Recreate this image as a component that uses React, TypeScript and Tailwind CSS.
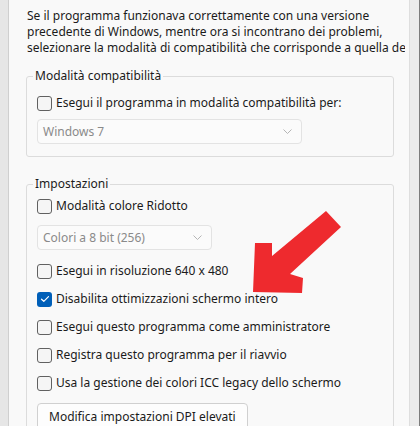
import React from "react";

const font = { fontFamily: '"Noto Sans", "Open Sans", sans-serif' };

const Check = ({ checked }: { checked?: boolean }) =>
  checked ? (
    <span className="w-[15px] h-[15px] rounded-[3px] bg-[#005fb8] flex items-center justify-center shrink-0">
      <svg width="10" height="8" viewBox="0 0 10 8" fill="none">
        <path d="M1.5 4.2 L3.8 6.3 L8.5 1.6" stroke="#fff" strokeWidth="1.2" strokeLinecap="round" strokeLinejoin="round" />
      </svg>
    </span>
  ) : (
    <span className="w-[15px] h-[15px] rounded-[3px] border border-[#616161] bg-[#f5f5f5] shrink-0" />
  );

const Row = ({ label, checked }: { label: string; checked?: boolean }) => (
  <div className="h-[28px] flex items-center gap-[4px]">
    <Check checked={checked} />
    <span className="text-[12px] leading-[16px] text-[#1b1b1b] whitespace-nowrap">{label}</span>
  </div>
);

const Select = ({ value, width }: { value: string; width: string }) => (
  <div
    className={`${width} h-[25px] border border-[#e3e3e3] rounded-[4px] bg-[#fbfbfb] flex items-center justify-between pl-[5px] pr-[9px]`}
  >
    <span className="text-[12px] leading-[16px] text-[#8a8a8a]">{value}</span>
    <svg width="9" height="5" viewBox="0 0 9 5" fill="none">
      <path d="M0.5 0.5 L4.5 4.5 L8.5 0.5" stroke="#b5b5b5" strokeWidth="1" />
    </svg>
  </div>
);

const App = () => {
  return (
    <div className="w-[420px] h-[426px] flex overflow-hidden bg-[#f9f9f9]" style={font}>
      <div className="w-[9px] h-full bg-[#e6e6e6] border-r border-[#cfcfcf]" />

      <div className="relative flex-1 h-full bg-[#f9f9f9] overflow-hidden">
        {/* intro text, clipped at the right like the window is */}
        <div className="pt-[8px] pl-[18px] mr-[4px] overflow-hidden text-[12px] leading-[16px] text-[#1b1b1b] whitespace-nowrap">
          <div>Se il programma funzionava correttamente con una versione</div>
          <div>precedente di Windows, mentre ora si incontrano dei problemi,</div>
          <div>selezionare la modalità di compatibilità che corrisponde a quella della versione.</div>
        </div>

        <fieldset className="ml-[17px] mr-[15px] mt-[12px] border border-[#dcdcdc] rounded-[3px] pl-[10px] pr-[10px] pt-[5px] pb-[12px]">
          <legend className="ml-[-4px] px-[2px] text-[12px] leading-[16px] text-[#1b1b1b]">
            Modalità compatibilità
          </legend>
          <Row label="Esegui il programma in modalità compatibilità per:" />
          <div className="mt-[2px]">
            <Select value="Windows 7" width="w-[265px]" />
          </div>
        </fieldset>

        <fieldset className="ml-[17px] mr-[15px] mt-[19px] border border-[#dcdcdc] rounded-[3px] pl-[10px] pr-[10px] pt-0 pb-[12px]">
          <legend className="ml-[-4px] px-[2px] text-[12px] leading-[16px] text-[#1b1b1b]">
            Impostazioni
          </legend>
          <Row label="Modalità colore Ridotto" />
          <div className="mt-[5px] mb-[7px]">
            <Select value="Colori a 8 bit (256)" width="w-[175px]" />
          </div>
          <Row label="Esegui in risoluzione 640 x 480" />
          <Row label="Disabilita ottimizzazioni schermo intero" checked />
          <Row label="Esegui questo programma come amministratore" />
          <Row label="Registra questo programma per il riavvio" />
          <Row label="Usa la gestione dei colori ICC legacy dello schermo" />
          <button className="mt-[6px] h-[27px] px-[11px] border border-[#d0d0d0] rounded-[4px] bg-[#fdfdfd] text-[12px] leading-[16px] text-[#1b1b1b]">
            Modifica impostazioni DPI elevati
          </button>
        </fieldset>

        {/* red annotation arrow */}
        <svg className="absolute left-0 top-0 pointer-events-none" width="400" height="426">
          <polygon
            points="244,292 246,243 263,243 263,256 317,211 332,227 281,274 294,278 293,293"
            fill="#ee2a2e"
          />
        </svg>
      </div>

      <div className="w-[11px] h-full bg-[#ececec] border-l border-[#dedede] flex justify-end">
        <div className="w-[1px] h-full bg-[#7d7d7d]" />
      </div>
    </div>
  );
};

export default App;
